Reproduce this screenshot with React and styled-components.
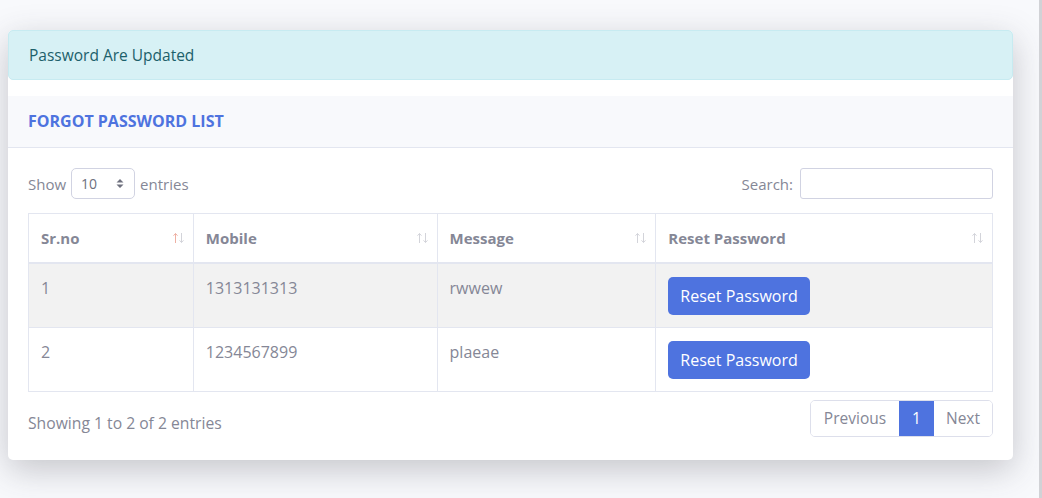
import React from "react"
import styled, { createGlobalStyle } from "styled-components"

const GlobalStyle = createGlobalStyle`
    html, body {
        margin: 0;
        padding: 0;
        background: #f8f9fc;
        font-family: "Open Sans", "Noto Sans", sans-serif;
        color: #858796;
    }
    * { box-sizing: border-box; }
`

const Layout = styled.div`
    display: flex;
    min-height: 498px;
`

const Content = styled.div`
    flex: 1;
    padding: 30px 26px 38px 8px;
    background: #f8f9fc;
`

const Edge = styled.div`
    width: 3px;
    background: #d1d2d6;
`

const Card = styled.div`
    background: #fff;
    border-radius: 5px;
    box-shadow: 0 10px 34px 0 rgba(58, 59, 69, 0.27);
`

const Alert = styled.div`
    background: #d7f1f5;
    border: 1px solid #c7ebf1;
    border-radius: 5px;
    color: #1c606a;
    font-size: 15.5px;
    line-height: 24px;
    padding: 12px 20px;
    margin-bottom: 16px;
`

const CardHeader = styled.div`
    background: #f8f9fc;
    border-bottom: 1px solid #e3e6f0;
    padding: 16px 20px;
`

const Title = styled.h6`
    margin: 0;
    font-size: 16px;
    line-height: 19px;
    font-weight: 700;
    color: #4e73df;
`

const CardBody = styled.div`
    padding: 20px 20px 23px;
`

const Controls = styled.div`
    display: flex;
    justify-content: space-between;
    align-items: center;
    font-size: 15px;
    height: 31px;
    margin-bottom: 14px;
`

const Label = styled.label`
    display: flex;
    align-items: center;
    gap: 5px;
    color: #858796;
`

const SelectBox = styled.div`
    display: flex;
    align-items: center;
    justify-content: space-between;
    width: 64px;
    height: 31px;
    padding: 0 10px 0 9px;
    border: 1px solid #d1d3e2;
    border-radius: 5px;
    color: #6e707e;
    font-size: 14px;
`

const Caret = styled.svg`
    width: 8px;
    height: 11px;
`

const SearchInput = styled.input`
    width: 193px;
    height: 31px;
    border: 1px solid #d1d3e2;
    border-radius: 3px;
    outline: none;
    margin-left: 2px;
`

const Table = styled.table`
    width: 100%;
    border-collapse: collapse;
    border: 1px solid #e3e6f0;
    font-size: 16px;
`

const Th = styled.th`
    position: relative;
    width: ${p => p.$w}px;
    text-align: left;
    font-size: 15px;
    font-weight: 700;
    color: #858796;
    padding: 12px 12px;
    line-height: 24px;
    border: 1px solid #e3e6f0;
    border-bottom: 2px solid #e3e6f0;
`

const Sort = styled.span`
    position: absolute;
    right: 9px;
    top: 50%;
    transform: translateY(-50%);
    display: flex;
    gap: 1px;
`

const Arrow = styled.svg`
    width: 5px;
    height: 11px;
`

const Row = styled.tr`
    background: ${p => (p.$striped ? "#f2f2f2" : "#fff")};
`

const Td = styled.td`
    vertical-align: top;
    padding: 12px 12px;
    line-height: 24px;
    border: 1px solid #e3e6f0;
    color: #858796;
`

const Button = styled.button`
    display: inline-block;
    height: 38px;
    margin-top: 1px;
    padding: 6px 12px;
    border: none;
    border-radius: 5px;
    background: #4e73df;
    color: #fff;
    font-family: inherit;
    font-size: 16px;
    line-height: 24px;
    cursor: pointer;
`

const Footer = styled.div`
    display: flex;
    justify-content: space-between;
    align-items: center;
    margin-top: 8px;
    font-size: 15.5px;
`

const Info = styled.div`
    color: #858796;
    padding-top: 8px;
    font-size: 15.7px;
`

const Pagination = styled.div`
    display: flex;
    border: 1px solid #dddfeb;
    border-radius: 5px;
    overflow: hidden;
`

const PageItem = styled.div`
    height: 35px;
    line-height: 35px;
    padding: 0 ${p => p.$pad}px;
    background: ${p => (p.$active ? "#4e73df" : "#fff")};
    color: ${p => (p.$active ? "#fff" : "#858796")};
`

const columns = [
    { name: "Sr.no", width: 165, active: true },
    { name: "Mobile", width: 244 },
    { name: "Message", width: 219 },
    { name: "Reset Password", width: 337 },
]

const rows = [
    { id: 1, mobile: "1313131313", message: "rwwew" },
    { id: 2, mobile: "1234567899", message: "plaeae" },
]

const SortIcon = ({ active }) => (
    <Sort>
        <Arrow viewBox="0 0 5 11">
            <path d="M2.5 1 V10.5 M0.5 3.2 L2.5 1 L4.5 3.2" stroke={active ? "#eeb0a3" : "#d3d4da"} strokeWidth="1" fill="none" />
        </Arrow>
        <Arrow viewBox="0 0 5 11">
            <path d="M2.5 0.5 V10 M0.5 7.8 L2.5 10 L4.5 7.8" stroke="#d3d4da" strokeWidth="1" fill="none" />
        </Arrow>
    </Sort>
)

const App = () => {
    return (
        <>
            <GlobalStyle />
            <Layout>
                <Content>
                    <Card>
                        <Alert>Password Are Updated</Alert>
                        <CardHeader>
                            <Title>FORGOT PASSWORD LIST</Title>
                        </CardHeader>
                        <CardBody>
                            <Controls>
                                <Label>
                                    Show
                                    <SelectBox>
                                        10
                                        <Caret viewBox="0 0 8 11">
                                            <path d="M4 1 L7.5 4.5 H0.5 Z M4 10 L7.5 6.5 H0.5 Z" fill="#6e707e" />
                                        </Caret>
                                    </SelectBox>
                                    entries
                                </Label>
                                <Label>
                                    Search:
                                    <SearchInput type="search" />
                                </Label>
                            </Controls>
                            <Table>
                                <thead>
                                    <tr>
                                        {columns.map(col => (
                                            <Th key={col.name} $w={col.width}>
                                                {col.name}
                                                <SortIcon active={col.active} />
                                            </Th>
                                        ))}
                                    </tr>
                                </thead>
                                <tbody>
                                    {rows.map((row, i) => (
                                        <Row key={row.id} $striped={i % 2 === 0}>
                                            <Td>{row.id}</Td>
                                            <Td>{row.mobile}</Td>
                                            <Td>{row.message}</Td>
                                            <Td>
                                                <Button>Reset Password</Button>
                                            </Td>
                                        </Row>
                                    ))}
                                </tbody>
                            </Table>
                            <Footer>
                                <Info>Showing 1 to 2 of 2 entries</Info>
                                <Pagination>
                                    <PageItem $pad={13}>Previous</PageItem>
                                    <PageItem $pad={13} $active>1</PageItem>
                                    <PageItem $pad={12}>Next</PageItem>
                                </Pagination>
                            </Footer>
                        </CardBody>
                    </Card>
                </Content>
                <Edge />
            </Layout>
        </>
    )
}

export default App
